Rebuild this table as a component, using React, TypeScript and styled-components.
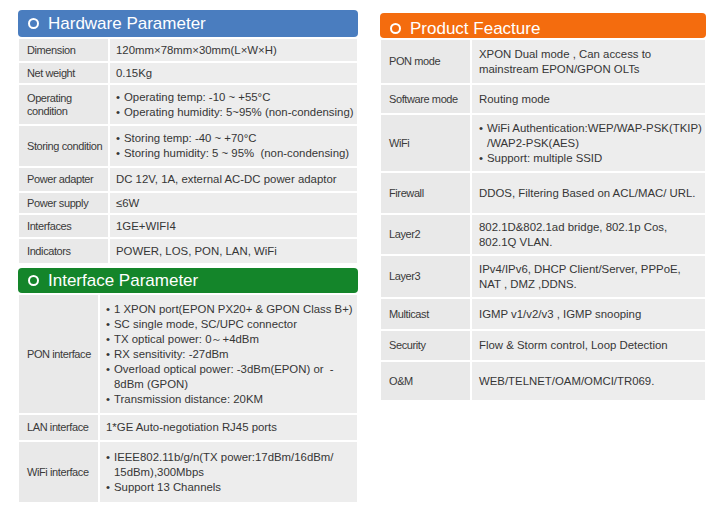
import React from "react";
import styled, { createGlobalStyle } from "styled-components";

type Row = { label: string; h: number; lines: string[]; bullets?: boolean };

const hardware: Row[] = [
    { label: "Dimension", h: 22, lines: ["120mm×78mm×30mm(L×W×H)"] },
    { label: "Net weight", h: 20, lines: ["0.15Kg"] },
    { label: "Operating\ncondition", h: 39, bullets: true, lines: ["Operating temp: -10 ~ +55°C", "Operating humidity: 5~95% (non-condensing)"] },
    { label: "Storing condition", h: 40, bullets: true, lines: ["Storing temp: -40 ~ +70°C", "Storing humidity: 5 ~ 95%\u00a0 (non-condensing)"] },
    { label: "Power adapter", h: 23, lines: ["DC 12V, 1A, external AC-DC power adaptor"] },
    { label: "Power supply", h: 20, lines: ["≤6W"] },
    { label: "Interfaces", h: 22, lines: ["1GE+WIFI4"] },
    { label: "Indicators", h: 24, lines: ["POWER, LOS, PON, LAN, WiFi"] },
];

const iface: Row[] = [
    {
        label: "PON interface", h: 118, bullets: true, lines: [
            "1 XPON port(EPON PX20+ & GPON Class B+)",
            "SC single mode, SC/UPC connector",
            "TX optical power: 0～+4dBm",
            "RX sensitivity: -27dBm",
            "Overload optical power: -3dBm(EPON) or\u00a0 -\n8dBm (GPON)",
            "Transmission distance: 20KM",
        ],
    },
    { label: "LAN interface", h: 25, lines: ["1*GE Auto-negotiation RJ45 ports"] },
    { label: "WiFi interface", h: 60, bullets: true, lines: ["IEEE802.11b/g/n(TX power:17dBm/16dBm/ 15dBm),300Mbps", "Support 13 Channels"] },
];

const features: Row[] = [
    { label: "PON mode", h: 43, lines: ["XPON Dual mode , Can access to mainstream EPON/GPON OLTs"] },
    { label: "Software mode", h: 28, lines: ["Routing mode"] },
    { label: "WiFi", h: 56, bullets: true, lines: ["WiFi Authentication:WEP/WAP-PSK(TKIP) /WAP2-PSK(AES)", "Support: multiple SSID"] },
    { label: "Firewall", h: 40, lines: ["DDOS, Filtering Based on ACL/MAC/ URL."] },
    { label: "Layer2", h: 39, lines: ["802.1D&802.1ad bridge, 802.1p Cos, 802.1Q VLAN."] },
    { label: "Layer3", h: 41, lines: ["IPv4/IPv6, DHCP Client/Server, PPPoE, NAT , DMZ ,DDNS."] },
    { label: "Multicast", h: 30, lines: ["IGMP v1/v2/v3 , IGMP snooping"] },
    { label: "Security", h: 29, lines: ["Flow & Storm control, Loop Detection"] },
    { label: "O&M", h: 38, lines: ["WEB/TELNET/OAM/OMCI/TR069."] },
];

const Section = ({ title, color, headH, shift = 0, labelW, valuePad, rows }: {
    title: string; color: string; headH: number; shift?: number; labelW: number; valuePad: number; rows: Row[];
}) => (
    <Block>
        <Header $color={color} $h={headH} $shift={shift}>
            <Ring />
            <Title>{title}</Title>
        </Header>
        <Table $labelW={labelW}>
            {rows.map(r => (
                <React.Fragment key={r.label}>
                    <Label $h={r.h}>{r.label}</Label>
                    <Value $pad={valuePad}>
                        {r.bullets
                            ? <Bullets>{r.lines.map(l => <li key={l}>{l}</li>)}</Bullets>
                            : r.lines[0]}
                    </Value>
                </React.Fragment>
            ))}
        </Table>
    </Block>
);

const App = () => (
    <>
        <Global />
        <Page>
            <LeftCol>
                <Section title="Hardware Parameter" color="#4a7dbf" headH={27} labelW={89} valuePad={6} rows={hardware} />
                <Section title="Interface Parameter" color="#14852a" headH={25} labelW={79} valuePad={6} rows={iface} />
            </LeftCol>
            <RightCol>
                <Section title="Product Feacture" color="#f46c0e" headH={25} shift={6} labelW={89} valuePad={7} rows={features} />
            </RightCol>
        </Page>
    </>
);

export default App;

const Global = createGlobalStyle`
    body {
        margin: 0;
        background: #fff;
        font-family: "Liberation Sans", Arial, sans-serif;
        color: #363636;
    }
`

const Page = styled.div`
    width: 726px;
    height: 521px;
    display: flex;
    align-items: flex-start;
    gap: 22px;
    padding: 10px 0 0 18px;
    box-sizing: border-box;
`

const LeftCol = styled.div`
    width: 340px;
    display: flex;
    flex-direction: column;
    gap: 5px;
`

const RightCol = styled.div`
    width: 326px;
    margin-top: 3px;
`

const Block = styled.div`
    display: flex;
    flex-direction: column;
    gap: 2px;
`

const Header = styled.div<{ $color: string; $h: number; $shift: number }>`
    height: ${p => p.$h}px;
    box-sizing: border-box;
    padding-top: ${p => p.$shift}px;
    background: ${p => p.$color};
    border-radius: 4px;
    display: flex;
    align-items: center;
    padding-left: 7px;
    gap: 9px;
    color: #fff;
`

const Ring = styled.span`
    width: 7px;
    height: 7px;
    border: 2.5px solid #fff;
    border-radius: 50%;
    margin-left: 3px;
`

const Title = styled.span`
    font-size: 17px;
    line-height: 1;
`

const Table = styled.div<{ $labelW: number }>`
    display: grid;
    grid-template-columns: ${p => p.$labelW}px 1fr;
    gap: 2px;
    margin: 0 1px;
`

const Label = styled.div<{ $h: number }>`
    min-height: ${p => p.$h}px;
    background: #e9e9e9;
    display: flex;
    align-items: center;
    padding-left: 8px;
    font-size: 11px;
    letter-spacing: -0.4px;
    line-height: 13px;
    white-space: pre-line;
    color: #3a3a3a;
`

const Value = styled.div<{ $pad: number }>`
    background: #ededed;
    display: flex;
    align-items: center;
    padding: 0 1px 0 ${p => p.$pad}px;
    font-size: 11.4px;
    line-height: 15px;
    color: #363636;
`

const Bullets = styled.ul`
    margin: 0;
    padding: 0;
    list-style: none;

    li {
        padding-left: 8px;
        text-indent: -8px;
        white-space: pre-line;
    }

    li::before {
        content: "•";
        display: inline-block;
        width: 8px;
        text-indent: 0;
    }
`
